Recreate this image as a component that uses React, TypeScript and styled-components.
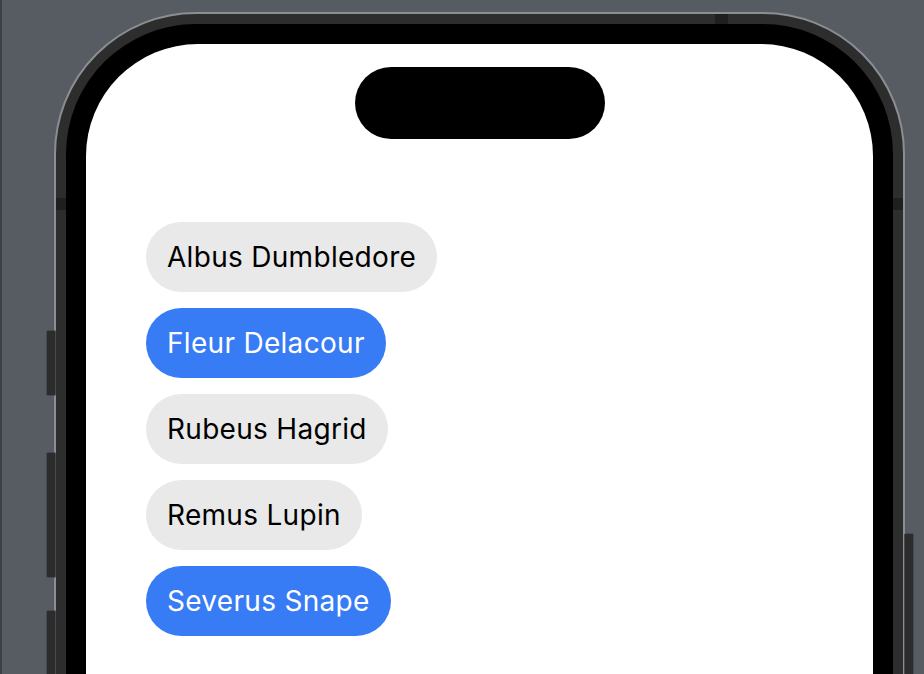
import React from "react";
import styled, { createGlobalStyle } from "styled-components";

const Global = createGlobalStyle`
  html, body { margin: 0; padding: 0; }
  body {
    background: #575c63;
    font-family: Inter, "Noto Sans", "Liberation Sans", sans-serif;
    overflow: hidden;
  }
`;

const Stage = styled.div`
  width: 924px;
  height: 674px;
  box-sizing: border-box;
  border-left: 2px solid #3c3f44;
  padding: 12px 0 0 52px;
  overflow: hidden;
  position: relative;
`;

const Phone = styled.div`
  position: relative;
  width: 851px;
  height: 900px;
  box-sizing: border-box;
  border: 2px solid #8b8e92;
  border-radius: 142px;
  background: #2d2d2e;
  padding: 10px;
`;

const SideButton = styled.div<{ $side: "left" | "right"; $top: number; $h: number }>`
  position: absolute;
  ${(p) => (p.$side === "left" ? "left: -10px;" : "right: -11px;")}
  top: ${(p) => p.$top}px;
  width: 8px;
  height: ${(p) => p.$h}px;
  background: #2c2c2d;
  border: 1px solid #464a50;
  border-radius: 2px;
`;

const Antenna = styled.div<{ $pos: "left" | "right" | "top" }>`
  position: absolute;
  background: #1f1f20;
  ${(p) =>
    p.$pos === "top"
      ? "top: 0; left: 659px; width: 13px; height: 10px;"
      : p.$pos === "left"
      ? "left: 0; top: 184px; width: 10px; height: 12px;"
      : "right: 0; top: 184px; width: 10px; height: 12px;"}
`;

const Bezel = styled.div`
  height: 100%;
  box-sizing: border-box;
  background: #000;
  border-radius: 130px;
  padding: 20px;
`;

const Screen = styled.div`
  height: 100%;
  background: #fff;
  border-radius: 112px;
  display: flex;
  flex-direction: column;
  align-items: flex-start;
  padding: 23px 0 0 60px;
  box-sizing: border-box;
`;

const Island = styled.div`
  align-self: center;
  width: 250px;
  height: 72px;
  border-radius: 36px;
  background: #000;
  margin-left: -60px;
`;

const List = styled.div`
  margin-top: 83px;
  display: flex;
  flex-direction: column;
  align-items: flex-start;
  gap: 16px;
`;

const Pill = styled.div<{ $selected: boolean }>`
  height: 70px;
  box-sizing: border-box;
  padding: 0 21px;
  border-radius: 35px;
  display: flex;
  align-items: center;
  font-size: 28px;
  letter-spacing: 0.3px;
  background: ${(p) => (p.$selected ? "#377bf5" : "#e9e9e9")};
  color: ${(p) => (p.$selected ? "#ffffff" : "#000000")};
`;

const people = [
  { name: "Albus Dumbledore", selected: false },
  { name: "Fleur Delacour", selected: true },
  { name: "Rubeus Hagrid", selected: false },
  { name: "Remus Lupin", selected: false },
  { name: "Severus Snape", selected: true },
];

export default function App() {
  return (
    <>
      <Global />
      <Stage>
        <Phone>
          <SideButton $side="left" $top={316} $h={64} />
          <SideButton $side="left" $top={438} $h={124} />
          <SideButton $side="left" $top={596} $h={200} />
          <SideButton $side="right" $top={519} $h={200} />
          <Antenna $pos="top" />
          <Antenna $pos="left" />
          <Antenna $pos="right" />
          <Bezel>
            <Screen>
              <Island />
              <List>
                {people.map((p) => (
                  <Pill key={p.name} $selected={p.selected}>
                    {p.name}
                  </Pill>
                ))}
              </List>
            </Screen>
          </Bezel>
        </Phone>
      </Stage>
    </>
  );
}
